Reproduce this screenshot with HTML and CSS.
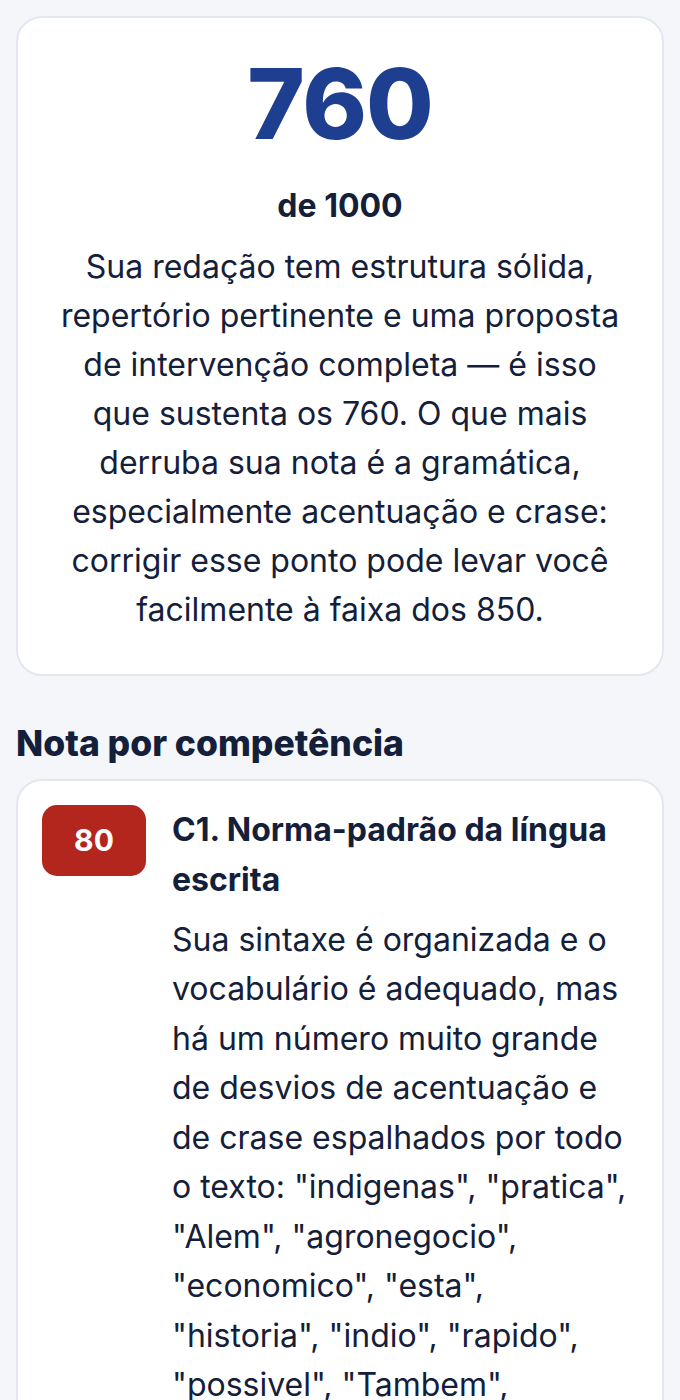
FILE: index.html
```html
<!DOCTYPE html>
<html lang="pt-BR">
<head>
    <meta charset="UTF-8">
    <meta name="viewport" content="width=device-width, initial-scale=1.0">
    <title>Resultado da redação</title>
    <link rel="stylesheet" href="styles.css">
</head>
<body>
    <!-- Nota geral -->
    <div class="card score-card">
        <div class="score">760</div>
        <div class="score-total">de 1000</div>
        <p class="summary">Sua redação tem estrutura sólida, repertório pertinente e uma proposta de intervenção completa — é isso que sustenta os 760. O que mais derruba sua nota é a gramática, especialmente acentuação e crase: corrigir esse ponto pode levar você facilmente à faixa dos 850.</p>
    </div>

    <!-- Competências -->
    <h2 class="section-title">Nota por competência</h2>

    <div class="card comp-card">
        <div class="comp-badge low">80</div>
        <div class="comp-body">
            <h3 class="comp-title">C1. Norma-padrão da língua escrita</h3>
            <p class="comp-text">Sua sintaxe é organizada e o vocabulário é adequado, mas há um número muito grande de desvios de acentuação e de crase espalhados por todo o texto: "indigenas", "pratica", "Alem", "agronegocio", "economico", "esta", "historia", "indio", "rapido", "possivel", "Tambem", "publico", "tecnico" e "epoca", além de "a medida" e "a regiao" sem crase.</p>
        </div>
    </div>
</body>
</html>
```

FILE: styles.css
```css
/* Estilo Global */
body {
    font-family: 'Inter', 'Noto Sans', sans-serif;
    margin: 0;
    padding: 16px;
    background: #f5f6fa;
    color: #14203a;
}

.card {
    background: #fff;
    border: 2px solid #e3e7f0;
    border-radius: 26px;
}

.score-card {
    padding: 32px 40px 40px;
    text-align: center;
}

.score {
    font-size: 98px;
    font-weight: 800;
    line-height: 1.1;
    color: #1e3f8f;
    letter-spacing: -1px;
}

.score-total {
    margin-top: 28px;
    font-size: 32px;
    font-weight: 700;
}

.summary {
    margin: 17px 0 0;
    font-size: 32px;
    line-height: 49px;
}

.section-title {
    margin: 46px 0 14px;
    font-size: 35.5px;
    font-weight: 800;
}

.comp-card {
    display: flex;
    gap: 26px;
    padding: 24px 28px 24px 24px;
}

.comp-badge {
    flex: none;
    width: 104px;
    height: 71px;
    border-radius: 15px;
    display: flex;
    align-items: center;
    justify-content: center;
    color: #fff;
    font-size: 30px;
    font-weight: 700;
}

.comp-badge.low {
    background: #b3261e;
}

.comp-title {
    margin: 0;
    font-size: 32px;
    font-weight: 700;
    line-height: 50px;
}

.comp-text {
    margin: 10px 0 0;
    font-size: 32px;
    line-height: 49.5px;
}
```
